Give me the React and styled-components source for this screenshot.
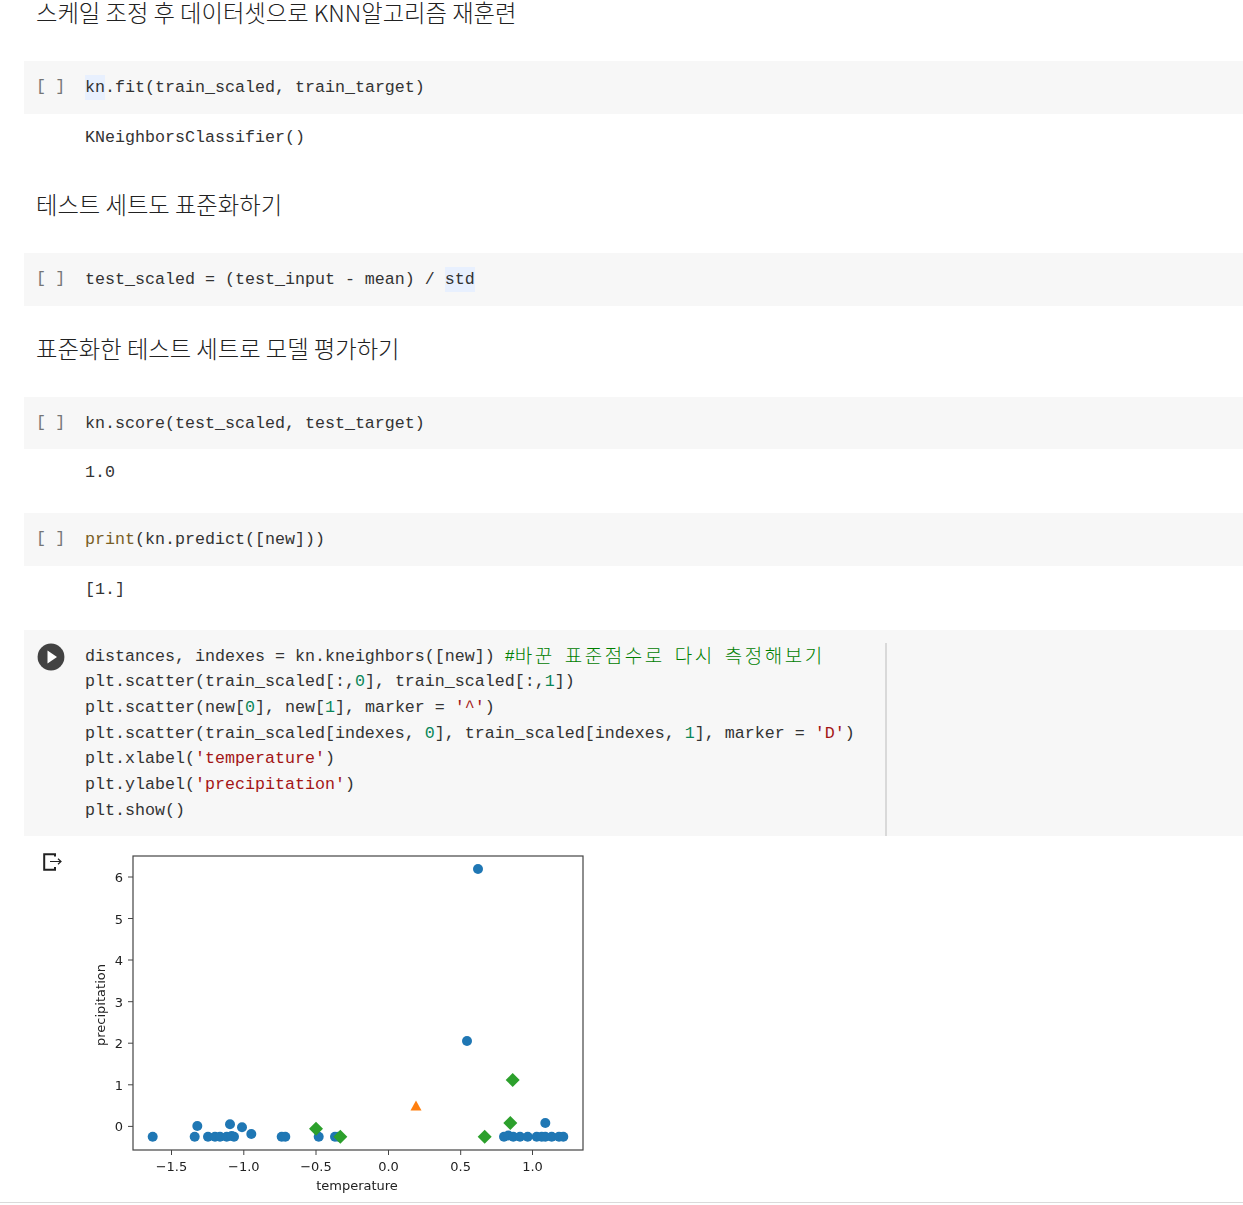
import React from "react";
import styled, { createGlobalStyle } from "styled-components";

const GlobalStyle = createGlobalStyle`
  html, body {
    margin: 0;
    padding: 0;
    background: #fff;
  }
`;

const Page = styled.div`
  width: 1243px;
  height: 1205px;
  overflow: hidden;
  display: flex;
  flex-direction: column;
`;

const Notebook = styled.div`
  padding-left: 24px;
  display: flex;
  flex-direction: column;
`;

const Heading = styled.div`
  height: 26px;
  line-height: 24px;
  margin: ${(props) => props.$top || 0}px 0 35px 12px;
  font-family: "Noto Sans CJK KR", "Roboto", sans-serif;
  font-size: 23.3px;
  font-weight: 300;
  color: #212121;
  white-space: nowrap;
`;

const Cell = styled.div`
  display: flex;
  background: #f7f7f7;
  min-height: 52.5px;
  margin-top: ${(props) => props.$top || 0}px;
`;

const Gutter = styled.div`
  width: 61px;
  flex: none;
`;

const Brackets = styled.span`
  display: block;
  padding: 13px 0 0 12px;
  font-family: "Liberation Mono", monospace;
  font-size: 16.67px;
  line-height: 26px;
  letter-spacing: -0.4px;
  color: #757575;
`;

const PlayButton = styled.svg`
  display: block;
  margin: 13px 0 0 13px;
`;

const Code = styled.pre`
  margin: 0;
  padding: 14px 0 12px;
  font-family: "Liberation Mono", monospace;
  font-size: 16.67px;
  line-height: 25.7px;
  color: #333;
  white-space: pre;
`;

const Editor = styled(Code)`
  width: 802px;
  height: 193px;
  box-sizing: border-box;
  padding: 1px 0 0;
  margin-top: 13px;
  border-right: 2px solid #d9d9d9;
`;

const Output = styled(Code)`
  padding: 11px 0 0 85px;
  margin-left: -24px;
  height: ${(props) => props.$height}px;
  box-sizing: border-box;
`;

const Mark = styled.span`
  background: #e8f0fe;
  padding: 3px 0;
`;

const Fn = styled.span`
  color: #795e26;
`;

const Num = styled.span`
  color: #098658;
`;

const Str = styled.span`
  color: #a31515;
`;

const Comment = styled.span`
  color: #008000;
`;

const Hangul = styled.span`
  font-family: "Noto Sans CJK KR", sans-serif;
  font-size: 19px;
  line-height: 1;
  font-weight: 300;
  letter-spacing: 2.52px;
  vertical-align: -1.5px;
`;

const ResultRow = styled.div`
  display: flex;
  height: 366px;
`;

const ResultGutter = styled.div`
  width: 61px;
  flex: none;
  padding: 17px 0 0 19px;
  box-sizing: border-box;
`;

const Chart = styled.svg`
  display: block;
  margin-top: 10px;
  filter: blur(0.45px);

  text {
    font-family: "DejaVu Sans", sans-serif;
    font-size: 13px;
    fill: #222;
  }
`;

const BottomRule = styled.div`
  border-top: 1px solid #dadada;
`;

const blue = [
  [478, 869], [467, 1041],
  [152.7, 1136.7], [194.7, 1136.7], [197.3, 1126], [208, 1136.7], [215, 1136.7], [220, 1136.7],
  [226.7, 1136.7], [231.7, 1136], [234, 1136.7], [230, 1124.3], [242, 1127.3], [251.3, 1134],
  [281.7, 1136.7], [285.3, 1136.7], [318.7, 1136.7], [335, 1136.7], [338.3, 1136.7],
  [504, 1136.7], [508.3, 1135.5], [513.3, 1136.7], [520, 1136.7], [527.7, 1136.7], [536.7, 1136.7],
  [541.7, 1136.7], [545.3, 1123], [545.3, 1136.7], [551.7, 1136.7], [559, 1136.7], [563.3, 1136.7],
];

const green = [
  [316, 1128.7], [340.3, 1136.7], [512.7, 1080], [510.3, 1123], [484.7, 1136.7],
];

const xTicks = [
  ["−1.5", 171.5], ["−1.0", 243.8], ["−0.5", 316], ["0.0", 388.5], ["0.5", 460.7], ["1.0", 532.5],
];

const yTicks = [
  ["6", 877], ["5", 918.5], ["4", 960], ["3", 1001.7], ["2", 1043.2], ["1", 1084.8], ["0", 1126.4],
];

function ScatterChart() {
  return (
    <Chart width="520" height="352" viewBox="85 846 520 352">
      <rect x="133" y="856" width="450" height="294" fill="none" stroke="#444" strokeWidth="1.2" />
      {xTicks.map(([label, x]) => (
        <g key={label}>
          <line x1={x} x2={x} y1="1150" y2="1155" stroke="#444" />
          <text x={x} y="1171" textAnchor="middle">{label}</text>
        </g>
      ))}
      {yTicks.map(([label, y]) => (
        <g key={label}>
          <line x1="128" x2="133" y1={y} y2={y} stroke="#444" />
          <text x="123" y={y + 5} textAnchor="end">{label}</text>
        </g>
      ))}
      <text x="357" y="1190" textAnchor="middle">temperature</text>
      <text transform="translate(105 1005) rotate(-90)" textAnchor="middle">precipitation</text>
      {blue.map(([cx, cy], i) => (
        <circle key={i} cx={cx} cy={cy} r="5" fill="#1f77b4" />
      ))}
      <polygon points="416,1100.5 421.5,1110.5 410.5,1110.5" fill="#ff7f0e" />
      {green.map(([cx, cy], i) => (
        <polygon
          key={i}
          points={`${cx},${cy - 7} ${cx + 7},${cy} ${cx},${cy + 7} ${cx - 7},${cy}`}
          fill="#2ca02c"
        />
      ))}
    </Chart>
  );
}

function OutIcon() {
  return (
    <svg width="20" height="18" viewBox="0 0 20 18" fill="none" stroke="#212121">
      <path d="M12 3.5V1.2H1.2V16.8H12V14" strokeWidth="2" />
      <path d="M7 8.5H18M15 5.8L18 8.5L15 11.2" strokeWidth="1.2" />
    </svg>
  );
}

function CodeCell({ children, top }) {
  return (
    <Cell $top={top}>
      <Gutter>
        <Brackets>[ ]</Brackets>
      </Gutter>
      <Code>{children}</Code>
    </Cell>
  );
}

export default function App() {
  return (
    <Page>
      <GlobalStyle />
      <Notebook>
        <Heading>스케일 조정 후 데이터셋으로 KNN알고리즘 재훈련</Heading>
        <CodeCell>
          <Mark>kn</Mark>.fit(train_scaled, train_target)
        </CodeCell>
        <Output $height={47.5}>KNeighborsClassifier()</Output>
        <Heading $top={31}>테스트 세트도 표준화하기</Heading>
        <CodeCell>
          test_scaled = (test_input - mean) / <Mark>std</Mark>
        </CodeCell>
        <Heading $top={30}>표준화한 테스트 세트로 모델 평가하기</Heading>
        <CodeCell>kn.score(test_scaled, test_target)</CodeCell>
        <Output $height={46}>1.0</Output>
        <CodeCell top={18}>
          <Fn>print</Fn>(kn.predict([new]))
        </CodeCell>
        <Output $height={46}>[1.]</Output>
        <Cell $top={18}>
          <Gutter>
            <PlayButton width="28" height="28" viewBox="0 0 28 28">
              <circle cx="14" cy="14" r="13.4" fill="#424242" />
              <path d="M10.5 7.5L20 14L10.5 20.5Z" fill="#fff" />
            </PlayButton>
          </Gutter>
          <Editor>
            distances, indexes = kn.kneighbors([new]){" "}
            <Comment>
              #<Hangul>바꾼</Hangul> <Hangul>표준점수로</Hangul> <Hangul>다시</Hangul>{" "}
              <Hangul>측정해보기</Hangul>
            </Comment>
            {"\n"}plt.scatter(train_scaled[:,<Num>0</Num>], train_scaled[:,<Num>1</Num>])
            {"\n"}plt.scatter(new[<Num>0</Num>], new[<Num>1</Num>], marker = <Str>'^'</Str>)
            {"\n"}plt.scatter(train_scaled[indexes, <Num>0</Num>], train_scaled[indexes, <Num>1</Num>], marker = <Str>'D'</Str>)
            {"\n"}plt.xlabel(<Str>'temperature'</Str>)
            {"\n"}plt.ylabel(<Str>'precipitation'</Str>)
            {"\n"}plt.show()
          </Editor>
        </Cell>
        <ResultRow>
          <ResultGutter>
            <OutIcon />
          </ResultGutter>
          <ScatterChart />
        </ResultRow>
      </Notebook>
      <BottomRule />
    </Page>
  );
}
